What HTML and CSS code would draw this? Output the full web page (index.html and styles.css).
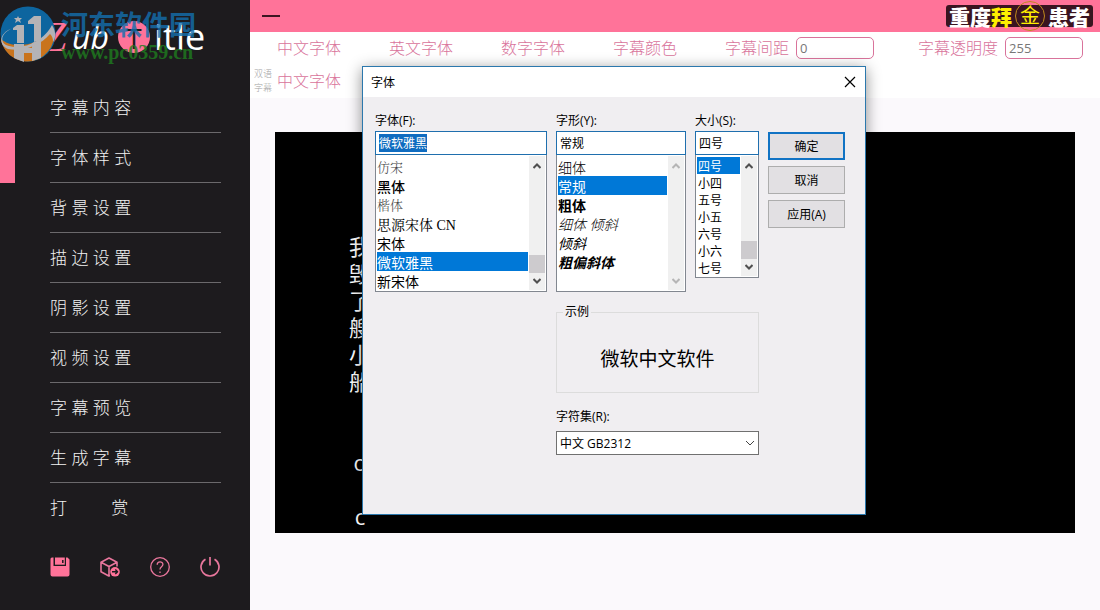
FILE: index.html
```html
<!DOCTYPE html>
<html lang="zh-CN">
<head>
    <meta charset="UTF-8">
    <meta name="viewport" content="width=device-width, initial-scale=1">
    <title>ZubTitle</title>
    <link rel="stylesheet" href="styles.css">
</head>
<body>
<div class="app">
    <!-- 左侧菜单 -->
    <aside class="sidebar">
        <div class="logo">
            <span class="logo-z">Z</span><span class="logo-ub">ub</span>
            <span class="logo-t">T</span><span class="logo-itle">itle</span>
            <div class="watermark">
                <svg class="watermark-icon" viewBox="0 0 56 56" width="56" height="56">
                    <circle cx="28" cy="28" r="27.500" fill="#0d659f"/>
                    <path d="M1 33C12 43 36 41 54 24A27.500 27.500 0 0 1 28 55.500C14 55.500 3 46 1 33Z" fill="#c9741d"/>
                    <path d="M13 22l4-3h7v18H17V24h-4ZM28 15l6-5h7v24l-7 2V18h-6Z" fill="#b4b3b6"/>
                    <path d="M14 38h10v4h8v-5l9-3v18l-9 3v-8h-8v9l-10-4Z" fill="#b4b3b6"/>
                    <path d="M13 22C0 27-1 38 9 40c15 4 35-5 43-21 4 6 4 13 1 17 0-4-1-6-3-8C40 40 22 46 8 43-3 38 0 26 13 22Z" fill="#b4b3b6"/>
                    <path d="M18 10l1 2 3 0-2 2 1 3-3-2-3 2 1-3-2-2 3 0Z" fill="#b4b3b6"/>
                </svg>
                <div class="watermark-text">
                    <div class="watermark-name">河东软件园</div>
                    <div class="watermark-url">www.pc0359.cn</div>
                </div>
            </div>
        </div>
        <nav>
            <ul class="menu">
                <li><a href="#">字 幕 内 容</a></li>
                <li class="active"><a href="#">字 体 样 式</a></li>
                <li><a href="#">背 景 设 置</a></li>
                <li><a href="#">描 边 设 置</a></li>
                <li><a href="#">阴 影 设 置</a></li>
                <li><a href="#">视 频 设 置</a></li>
                <li><a href="#">字 幕 预 览</a></li>
                <li><a href="#">生 成 字 幕</a></li>
                <li><a href="#">打          赏</a></li>
            </ul>
        </nav>
        <div class="tools">
            <button type="button" aria-label="保存">
                <svg viewBox="0 0 20 20" width="20" height="20">
                    <path d="M2 0.500H3.500V9H16V0.500H17.500L19.500 2.500V17.500Q19.500 19.500 17.500 19.500H2.500Q0.500 19.500 0.500 17.500V2Q0.500 0.500 2 0.500Z" fill="#ff7399"/>
                    <path d="M5 0.500H14.800V7.700H5Z" fill="#ff7399"/>
                    <path d="M12.800 3V6" stroke="#1d1b1e" stroke-width="1.500"/>
                </svg>
            </button>
            <button type="button" aria-label="导出">
                <svg viewBox="0 0 20 20" width="20" height="20" fill="none" stroke="#e8769c" stroke-width="1.600" stroke-linejoin="round">
                    <path d="M10 18.700 8.800 19 1 14.800V5.200L9 1l8 4.200V9.500M1 5.200 9 9.500l8-4.300M9 9.500V19"/>
                    <circle cx="15" cy="14.800" r="4.800" fill="#ff7399" stroke="none"/>
                    <path d="M12 14.800H17.500M15.300 12.500l2.300 2.300-2.300 2.300" stroke="#1d1b1e" stroke-width="1.400"/>
                </svg>
            </button>
            <button type="button" aria-label="帮助">
                <svg viewBox="0 0 20 20" width="20" height="20" fill="none" stroke="#e8769c" stroke-width="1.300">
                    <circle cx="10" cy="10" r="9.300"/>
                    <path d="M7.200 7.800C7.200 4 12.900 4 12.900 7.600 12.900 9.800 10 9.800 10 12.500"/>
                    <path d="M10 14.500V16"/>
                </svg>
            </button>
            <button type="button" aria-label="退出">
                <svg viewBox="0 0 20 20" width="20" height="20" fill="none" stroke="#e8769c" stroke-width="1.700">
                    <path d="M5.500 2.200A9 9 0 1 0 14.500 2.200M10 0V8.500"/>
                </svg>
            </button>
        </div>
    </aside>

    <!-- 右侧内容 -->
    <main class="main">
        <header class="topbar">
            <button type="button" class="minimize" aria-label="最小化"></button>
            <div class="badge">重度<b>拜</b><i>金</i>患者</div>
        </header>
        <div class="toolbar">
            <div class="toolbar-row">
                <a href="#">中文字体</a>
                <a href="#">英文字体</a>
                <a href="#">数字字体</a>
                <a href="#">字幕颜色</a>
                <div class="field">
                    <label for="spacing">字幕间距</label>
                    <input type="text" id="spacing" value="0">
                </div>
                <div class="field">
                    <label for="alpha">字幕透明度</label>
                    <input type="text" id="alpha" value="255">
                </div>
            </div>
            <div class="toolbar-row">
                <span class="note">双语字幕</span>
                <a href="#">中文字体</a>
            </div>
        </div>
        <div class="preview">
            <div class="caption">我<br>毁<br>了<br>艘<br>小<br>船<br><br><br>o<br><br>c</div>
        </div>
    </main>
</div>

<!-- 字体对话框 -->
<div class="dialog" role="dialog" aria-labelledby="dialog-title">
    <div class="dialog-head">
        <span id="dialog-title">字体</span>
        <button type="button" class="close" aria-label="关闭">
            <svg viewBox="0 0 12 12" width="12" height="12"><path d="M1 1L11 11M11 1L1 11" stroke="#000" stroke-width="1.200"/></svg>
        </button>
    </div>
    <form class="dialog-body">
        <div class="picker">
            <label for="font">字体(F):</label>
            <input type="text" id="font" value="微软雅黑">
            <div class="list">
                <select size="7" aria-label="字体列表">
                    <option class="fangsong">仿宋</option>
                    <option class="heiti">黑体</option>
                    <option class="fangsong">楷体</option>
                    <option class="songti">思源宋体 CN</option>
                    <option>宋体</option>
                    <option selected>微软雅黑</option>
                    <option>新宋体</option>
                </select>
                <div class="scroll">
                    <svg viewBox="0 0 8 6" width="8" height="6"><path d="M0.500 5L4 1.500L7.500 5"/></svg>
                    <span class="thumb"></span>
                    <svg viewBox="0 0 8 6" width="8" height="6"><path d="M0.500 1L4 4.500L7.500 1"/></svg>
                </div>
            </div>
        </div>
        <div class="picker">
            <label for="style">字形(Y):</label>
            <input type="text" id="style" value="常规">
            <div class="list">
                <select size="7" aria-label="字形列表">
                    <option class="light">细体</option>
                    <option selected>常规</option>
                    <option class="bold">粗体</option>
                    <option class="light italic">细体 倾斜</option>
                    <option class="italic">倾斜</option>
                    <option class="bold italic">粗偏斜体</option>
                </select>
                <div class="scroll disabled">
                    <svg viewBox="0 0 8 6" width="8" height="6"><path d="M0.500 5L4 1.500L7.500 5"/></svg>
                    <svg viewBox="0 0 8 6" width="8" height="6"><path d="M0.500 1L4 4.500L7.500 1"/></svg>
                </div>
            </div>
        </div>
        <div class="picker">
            <label for="size">大小(S):</label>
            <input type="text" id="size" value="四号">
            <div class="list list-size">
                <select size="7" aria-label="大小列表">
                    <option selected>四号</option>
                    <option>小四</option>
                    <option>五号</option>
                    <option>小五</option>
                    <option>六号</option>
                    <option>小六</option>
                    <option>七号</option>
                </select>
                <div class="scroll">
                    <svg viewBox="0 0 8 6" width="8" height="6"><path d="M0.500 5L4 1.500L7.500 5"/></svg>
                    <span class="thumb"></span>
                    <svg viewBox="0 0 8 6" width="8" height="6"><path d="M0.500 1L4 4.500L7.500 1"/></svg>
                </div>
            </div>
        </div>
        <div class="actions">
            <button type="submit" class="primary">确定</button>
            <button type="button">取消</button>
            <button type="button">应用(A)</button>
        </div>
        <div class="extra">
            <fieldset>
                <legend>示例</legend>
                <div class="sample">微软中文软件</div>
            </fieldset>
            <label for="charset">字符集(R):</label>
            <div class="combo">
                <select id="charset">
                    <option>中文 GB2312</option>
                </select>
                <svg viewBox="0 0 10 6" width="10" height="6"><path d="M1 1L5 5L9 1"/></svg>
            </div>
        </div>
    </form>
</div>
<script src="main.js"></script>
</body>
</html>
```
FILE: styles.css
```css
* {
    box-sizing: border-box;
}
body {
    margin: 0;
    font-family: "Open Sans", "Noto Sans CJK SC", sans-serif;
    font-size: 12px;
    background: #fbf9fc;
}
button, input, select {
    font: inherit;
}
a {
    text-decoration: none;
}
.app {
    display: flex;
    min-height: 100vh;
}

/*左侧菜单*/
.sidebar {
    width: 250px;
    flex: none;
    background: #1d1b1e;
}
.logo {
    position: relative;
    display: flex;
    align-items: center;
    height: 83px;
    padding: 0 0 10px 43px;
    color: #fff;
    font-size: 36px;
    line-height: 40px;
}
.logo-z, .logo-ub {
    flex: none;
    font-style: italic;
}
.logo-z {
    width: 29px;
    color: #ff7399;
    font-family: "Liberation Serif", serif;
    font-size: 42px;
}
.logo-ub {
    width: 46px;
    font-size: 32px;
}
.logo-t {
    flex: none;
    width: 32px;
    height: 32px;
    margin-right: 4px;
    border-radius: 50%;
    background: #ff7399;
    color: #1d1b1e;
    font-size: 28px;
    line-height: 34px;
    text-align: center;
}
/*水印盖在logo上面*/
.watermark {
    position: absolute;
    left: 0;
    top: 6px;
    display: flex;
    gap: 5px;
}
.watermark-text {
    opacity: 0.8;
}
.watermark-name {
    color: #146fae;
    font-family: "Noto Sans CJK SC", sans-serif;
    font-size: 27px;
    font-weight: bold;
    line-height: 36px;
}
.watermark-url {
    color: #1f7d1f;
    font-family: "Liberation Serif", serif;
    font-size: 20px;
    font-weight: bold;
    line-height: 20px;
}
.menu {
    margin: 0;
    padding: 0;
    list-style: none;
}
.menu li {
    padding: 0 29px 0 35px;
    border-left: 15px solid transparent;
}
.menu .active {
    border-left-color: #ff7399;
}
.menu a {
    display: block;
    padding-top: 1px;
    border-bottom: 1px solid #6b696c;
    color: #f2f2f2;
    font-size: 17px;
    font-weight: 300;
    line-height: 48px;
    white-space: pre;
}
.menu li:last-child a {
    border-bottom-color: transparent;
}
.tools {
    display: flex;
    justify-content: space-between;
    padding: 24px 30px 24px 50px;
}
.tools button {
    padding: 0;
    border: 0;
    background: none;
}
.tools svg {
    display: block;
}

/*顶部*/
.main {
    flex: 1;
    min-width: 0;
}
.topbar {
    display: flex;
    justify-content: space-between;
    align-items: center;
    height: 32px;
    padding: 0 7px 0 12px;
    background: #ff7399;
}
.minimize {
    width: 18px;
    height: 2px;
    padding: 0;
    border: 0;
    background: #3d1522;
}
.badge {
    display: flex;
    align-items: center;
    height: 22px;
    padding: 0 3px;
    border-radius: 3px;
    background: #3a1420;
    color: #fff;
    font-family: "Noto Sans CJK SC", sans-serif;
    font-size: 21px;
    font-weight: 900;
    line-height: 20px;
}
.badge b {
    color: #ffef00;
    font-weight: 900;
}
.badge i {
    width: 30px;
    height: 30px;
    margin: 0 3px;
    border: 1px solid #c08a1c;
    border-radius: 50%;
    color: #ffef00;
    font-size: 20px;
    font-style: normal;
    font-weight: 400;
    line-height: 26px;
    text-align: center;
}

/*工具栏*/
.toolbar {
    background: #fff;
    color: #d9739b;
    font-size: 16px;
    font-weight: 300;
    line-height: 22px;
}
.toolbar a {
    width: 112px;
    color: #d9739b;
}
.toolbar-row {
    position: relative;
    display: flex;
    align-items: center;
    height: 33px;
    padding: 0 0 2px 27px;
}
.field {
    display: flex;
    align-items: center;
    gap: 7px;
    margin-right: 44px;
    white-space: nowrap;
}
.field:last-child {
    margin-right: 0;
}
.field input {
    width: 78px;
    height: 22px;
    padding: 0 3px;
    border: 1px solid #d9739b;
    border-radius: 5px;
    color: #777;
    font-size: 13px;
    font-weight: 400;
}
.note {
    position: absolute;
    left: 4px;
    width: 18px;
    color: #a4a4a4;
    font-size: 9px;
    line-height: 14px;
}

/*预览*/
.preview {
    height: 401px;
    margin: 34px 25px 25px;
    padding: 101px 73px 0;
    background: #000;
    overflow: hidden;
}
.caption {
    width: 24px;
    color: #fff;
    font-size: 22px;
    line-height: 27px;
    text-align: center;
}

/*字体对话框*/
.dialog {
    position: absolute;
    left: 362px;
    top: 66px;
    width: 504px;
    border: 1px solid #2b78ad;
    background: #f0eef1;
    box-shadow: 0 3px 14px rgba(0, 0, 0, 0.45);
    color: #000;
}
.dialog-head {
    display: flex;
    justify-content: space-between;
    align-items: center;
    height: 30px;
    padding: 0 9px 0 8px;
    background: #fff;
}
.close {
    padding: 0;
    border: 0;
    background: none;
}
.close svg {
    display: block;
}
.dialog-body {
    display: grid;
    grid-template-columns: 172px 130px 64px 77px;
    column-gap: 9px;
    padding: 14px 12px 59px;
}
.dialog label {
    display: block;
    height: 20px;
    line-height: 20px;
}
.picker input {
    display: block;
    width: 100%;
    height: 24px;
    padding: 0 3px;
    border: 1px solid #1f6fae;
    outline: 0;
    background: #fff;
}
.picker input::selection {
    background: #0f6cc0;
    color: #fff;
}
.list {
    display: flex;
    height: 137px;
    padding: 1px;
    border: 1px solid #828790;
    border-top: 0;
    background: #fff;
    font-size: 14px;
}
.list select {
    flex: 1;
    min-width: 0;
    height: 135px;
    padding: 1px 0 0;
    border: 0;
    outline: 0;
    background: #fff;
    overflow: hidden;
}
.list option {
    height: 19px;
    min-height: 0;
    padding: 0;
    color: #000;
    line-height: 18px;
}
.list option:checked {
    background: #0078d7 linear-gradient(#0078d7, #0078d7);
    color: #fff;
}
.list-size {
    height: 123px;
    font-size: 12px;
}
.list-size select {
    height: 121px;
}
.list-size option {
    height: 17px;
    padding: 0 1px;
    line-height: 16px;
}
.list .fangsong {
    color: #444;
    font-family: "Liberation Serif", "Noto Serif CJK SC", "Noto Sans CJK SC", serif;
    font-size: 13px;
    font-weight: 300;
}
.list .songti {
    font-family: "Liberation Serif", "Noto Serif CJK SC", "Noto Sans CJK SC", serif;
}
.list .heiti {
    font-weight: 500;
}
.list .light {
    font-weight: 300;
}
.list .bold {
    font-weight: 700;
}
.list .italic {
    font-style: italic;
}
.scroll {
    display: flex;
    flex-direction: column;
    align-items: center;
    justify-content: space-between;
    width: 17px;
    padding: 7px 0 6px;
    border-left: 1px solid #fff;
    background: #f0f0f0;
}
.scroll svg {
    fill: none;
    stroke: #505050;
    stroke-width: 2;
}
.scroll.disabled svg {
    stroke: #b5b5b5;
}
.thumb {
    width: 100%;
    height: 18px;
    margin: auto 0 5px;
    background: #cdcbce;
}
.actions {
    display: flex;
    flex-direction: column;
    gap: 6px;
    padding-top: 21px;
}
.actions button {
    height: 28px;
    padding: 0;
    border: 1px solid #adadad;
    background: #e2e0e3;
    color: #000;
}
.actions .primary {
    border: 2px solid #1173c4;
}
.extra {
    grid-column: 2 / 4;
    padding-top: 11px;
}
.extra fieldset {
    height: 90px;
    margin: 0 0 14px;
    padding: 0;
    border: 1px solid #dcdcdc;
}
.extra legend {
    margin-left: 6px;
    padding: 0 2px;
    line-height: 18px;
}
.sample {
    font-size: 19px;
    line-height: 76px;
    text-align: center;
}
.combo {
    position: relative;
    margin-top: 4px;
}
.combo select {
    display: block;
    width: 100%;
    height: 24px;
    padding: 0 3px;
    border: 1px solid #707070;
    border-radius: 0;
    appearance: none;
    background: #fff;
    color: #000;
}
/*下拉箭头*/
.combo svg {
    position: absolute;
    right: 4px;
    top: 9px;
    fill: none;
    stroke: #444;
    pointer-events: none;
}
```
FILE: main.js
```js
// 打开对话框时选中当前字体
var font = document.getElementById('font');
font.focus();
font.select();
```
